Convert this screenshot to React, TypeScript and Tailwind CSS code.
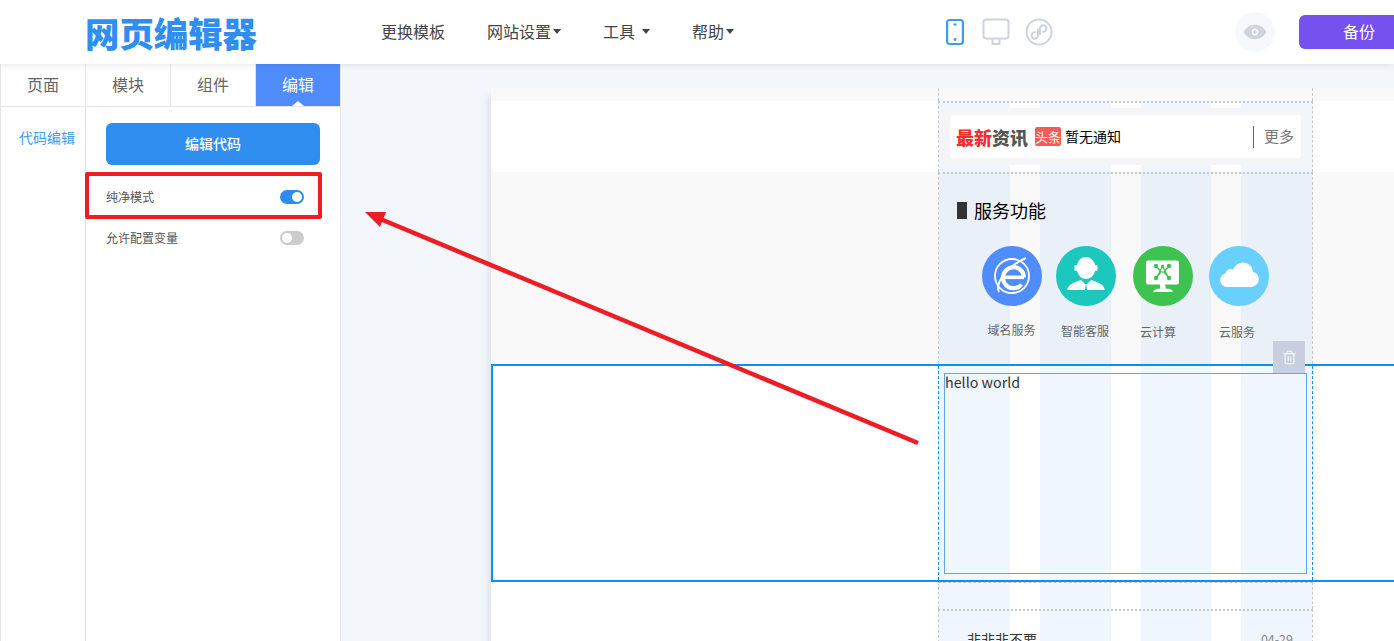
import { Trash2 } from "lucide-react";

const PhoneIcon = () => (
  <svg width="18" height="28" viewBox="0 0 18 28" fill="none">
    <rect x="1.100" y="2" width="15.800" height="24" rx="2.500" stroke="#3d9bf0" strokeWidth="2.200" />
    <rect x="7.500" y="5.500" width="3" height="2" fill="#3d9bf0" />
    <circle cx="9" cy="21.500" r="1.400" fill="#3d9bf0" />
  </svg>
);

const MonitorIcon = () => (
  <svg width="28" height="28" viewBox="0 0 28 28" fill="none" stroke="#cdd3e0" strokeWidth="2">
    <rect x="1.500" y="1.500" width="25" height="19" rx="2.500" />
    <path d="M10.500 21v5h7v-5" />
  </svg>
);

const MiniIcon = () => (
  <svg width="28" height="28" viewBox="0 0 28 28" fill="none" stroke="#cdd3e0" strokeWidth="2">
    <circle cx="14" cy="14" r="12.500" />
    <path d="M13 11.500v6a3.200 3.200 0 1 1-3.200-3.200M15 16.500v-6a3.200 3.200 0 1 1 3.200 3.200" strokeLinecap="round" />
  </svg>
);

const EyeIcon = () => (
  <svg width="24" height="16" viewBox="0 0 24 16">
    <path fillRule="evenodd" fill="#cdd3e0" d="M0.500 8C3.500 3 7.500 0.800 12 0.800S20.500 3 23.500 8C20.500 13 16.500 15.200 12 15.200S3.500 13 0.500 8ZM12 4.600a3.400 3.400 0 1 0 0 6.800a3.400 3.400 0 0 0 0-6.800Z" />
    <circle cx="12" cy="8" r="1.700" fill="#cdd3e0" />
  </svg>
);

const IeIcon = () => (
  <svg viewBox="0 0 60 60" className="w-[60px] h-[60px]">
    <circle cx="30" cy="30" r="30" fill="#4f8dff" />
    <circle cx="30" cy="30" r="17" fill="none" stroke="#fff" strokeWidth="1.800" />
    <path d="M17 46C13 37 24 21 44 12" fill="none" stroke="#fff" strokeWidth="2" />
    <path d="M42 31.500A10.500 10.500 0 1 0 39.500 38.500" fill="none" stroke="#fff" strokeWidth="4.200" />
    <rect x="22" y="29.500" width="20" height="3.600" fill="#fff" />
  </svg>
);

const AgentIcon = () => (
  <svg viewBox="0 0 60 60" className="w-[60px] h-[60px]">
    <circle cx="30" cy="30" r="30" fill="#1cc7bd" />
    <ellipse cx="30" cy="22" rx="9.500" ry="11" fill="#fff" />
    <rect x="18.500" y="19" width="2.500" height="6" rx="1.200" fill="#fff" />
    <rect x="39" y="19" width="2.500" height="6" rx="1.200" fill="#fff" />
    <path d="M11 44c1-6 8-8 14-10l4 4h2l4-4c6 2 13 4 14 10Z" fill="#fff" />
    <path d="M30 37.500l-1.200 6.500h2.400Z" fill="#1cc7bd" />
    <path d="M40 25c0 6-3 8-8 10" fill="none" stroke="#1cc7bd" strokeWidth="1" />
  </svg>
);

const CloudComputeIcon = () => (
  <svg viewBox="0 0 60 60" className="w-[60px] h-[60px]">
    <circle cx="30" cy="30" r="30" fill="#3ec250" />
    <rect x="13" y="14.500" width="33" height="24" rx="2" fill="#fff" />
    <path d="M27 38h5l1 5h-6Z" fill="#fff" />
    <path d="M20 46c1-3 4-3.500 10-3.500s9 .5 10 3.500Z" fill="#fff" />
    <g stroke="#3ec250" strokeWidth="1.200" fill="none">
      <path d="M23 20l5 6 3 0 5-6M23 32l5-6 3 0 5 6M29.500 20l-6 12M29.500 20l6 12" />
    </g>
    <g fill="#3ec250">
      <circle cx="23" cy="20" r="2.200" />
      <circle cx="36" cy="20" r="2.200" />
      <circle cx="23" cy="32" r="2.200" />
      <circle cx="36" cy="32" r="2.200" />
      <circle cx="29.500" cy="20" r="1.500" />
    </g>
  </svg>
);

const CloudIcon = () => (
  <svg viewBox="0 0 60 60" className="w-[60px] h-[60px]">
    <circle cx="30" cy="30" r="30" fill="#69cffc" />
    <path d="M18 41a7 7 0 0 1-1.500-13.800 5.500 5.500 0 0 1 7.500-3.700C26 19.500 29.500 16.500 34 16.500c5.500 0 9.500 4 10 9.200A7.800 7.800 0 0 1 43 41Z" fill="#fff" />
  </svg>
);

const services = [
  { name: "域名服务", icon: <IeIcon />, wrap: "", label: "mt-[16px] -ml-[1px]" },
  { name: "智能客服", icon: <AgentIcon />, wrap: "ml-[14px]", label: "mt-[17px] -ml-[2px]" },
  { name: "云计算", icon: <CloudComputeIcon />, wrap: "ml-[17px]", label: "mt-[18px] -ml-[10px]" },
  { name: "云服务", icon: <CloudIcon />, wrap: "ml-[16px]", label: "mt-[18px] -ml-[4px]" },
];

const tabs = ["页面", "模块", "组件"];

const Toggle = ({ on }: { on: boolean }) =>
  on ? (
    <div className="w-6 h-[14px] rounded-full bg-[#2d8cf0] flex items-center justify-end pr-[2px]">
      <div className="w-[10px] h-[10px] rounded-full bg-white" />
    </div>
  ) : (
    <div className="w-6 h-[14px] rounded-full bg-[#cccccc] flex items-center pl-[2px]">
      <div className="w-[10px] h-[10px] rounded-full bg-white" />
    </div>
  );

const Caret = () => <span className="inline-block ml-[2px] mt-[1px] border-x-[4px] border-x-transparent border-t-[5px] border-t-[#444]" />;

export default function App() {
  return (
    <div className="relative h-screen overflow-hidden bg-white flex flex-col font-['Noto_Sans_CJK_SC','Liberation_Sans',sans-serif]">
      <header className="relative z-20 h-16 shrink-0 bg-white flex items-center pl-[85px] shadow-[0_2px_6px_rgba(0,0,0,0.07)] overflow-hidden">
        <div className="w-[172px] shrink-0 text-[34.400px] leading-none font-black text-[#2f8ef0] whitespace-nowrap">网页编辑器</div>
        <nav className="ml-[124px] flex items-center gap-[42px] text-[16px] leading-6 pb-[2px] text-[#444] whitespace-nowrap shrink-0">
          <span className="w-16">更换模板</span>
          <span className="w-[74px] flex items-center"><span className="w-16">网站设置</span><Caret /></span>
          <span className="w-[47px] flex items-center"><span className="w-[39px]">工具</span><Caret /></span>
          <span className="w-[42px] flex items-center"><span className="w-8">帮助</span><Caret /></span>
        </nav>
        <div className="ml-[212px] flex items-center gap-[18px] shrink-0">
          <PhoneIcon />
          <MonitorIcon />
          <div className="-ml-[3px]"><MiniIcon /></div>
        </div>
        <div className="ml-[182px] w-10 h-10 rounded-full bg-[#f7f8fa] flex items-center justify-center shrink-0">
          <EyeIcon />
        </div>
        <div className="ml-6 w-[120px] h-[34px] shrink-0 rounded-md bg-[#7551f0] text-white text-[16px] pb-[3px] flex items-center pl-11">备份</div>
      </header>

      <div className="flex-1 flex min-h-0">
        <aside className="w-[341px] shrink-0 bg-white border-x border-[#e6e6e6] flex flex-col">
          <div className="flex h-[43px] shrink-0 border-b border-[#e6e6e6] text-[16px] text-[#666]">
            {tabs.map((t) => (
              <div key={t} className="w-[85px] border-r border-[#e6e6e6] pb-[2px] flex items-center justify-center">{t}</div>
            ))}
            <div className="relative flex-1 bg-[#4f8dff] text-white pb-[2px] flex items-center justify-center">
              编辑
              <span className="absolute bottom-0 left-1/2 -translate-x-1/2 border-x-[6px] border-x-transparent border-b-[5px] border-b-white" />
            </div>
          </div>
          <div className="flex-1 flex">
            <div className="w-[85px] border-r border-[#dddddd] pt-5 pl-[18px] text-[14px] leading-5 text-[#3d9bf0] whitespace-nowrap">代码编辑</div>
            <div className="flex-1 pt-4 pl-5 pr-5">
              <div className="w-[214px] h-[42px] rounded-md bg-[#2f8ef0] text-white text-[14px] font-medium pb-[2px] flex items-center justify-center">编辑代码</div>
              <div className="mt-[25px] w-[198px] h-[14px] flex items-center justify-between text-[12px] text-[#555]">
                <span>纯净模式</span>
                <Toggle on />
              </div>
              <div className="mt-[27px] w-[198px] h-[14px] flex items-center justify-between text-[12px] text-[#555]">
                <span>允许配置变量</span>
                <Toggle on={false} />
              </div>
            </div>
          </div>
        </aside>

        <main className="flex-1 min-w-0 bg-[#f3f6fa] pt-6 pl-[150px] overflow-hidden">
          <div className="relative h-full bg-white shadow-[-4px_8px_6px_rgba(0,0,0,0.07)]">
            <div className="absolute top-[13px] bottom-0 left-[448px] w-[373px] flex gap-[30px]">
              <div className="flex-1 bg-[#3d8df5]/[0.08]" />
              <div className="flex-1 bg-[#3d8df5]/[0.08]" />
              <div className="flex-1 bg-[#3d8df5]/[0.08]" />
              <div className="flex-1 bg-[#3d8df5]/[0.08]" />
            </div>

            <div className="h-[13px] bg-[#f9f9f9]">
              <div className="relative ml-[447px] w-[375px] h-full border-x border-dashed border-[#c8c8c8]" />
            </div>

            <div className="h-[71px]">
              <div className="relative ml-[447px] w-[375px] h-full border-x border-t-2 border-dashed [border-top-style:dotted] border-[#c8c8c8] pt-[5px] pr-[3px]">
                <div className="h-[57px] bg-[#f5f5f7] pt-[7px] pl-[11px] pr-[8px]">
                  <div className="h-[43px] rounded bg-white flex items-center pl-[6px] pr-[6px] whitespace-nowrap">
                    <span className="text-[18px] leading-none font-black text-[#f23030]">最新</span>
                    <span className="text-[18px] leading-none font-black text-[#555]">资讯</span>
                    <span className="ml-[7px] w-[26px] h-[19px] rounded-[2px] bg-[#fa5a55] text-white text-[13px] flex items-center justify-center">头条</span>
                    <span className="ml-[4px] text-[14px] text-black">暂无通知</span>
                    <span className="ml-auto w-px h-[22px] bg-[#666]" />
                    <span className="ml-[10px] mr-[1px] text-[15px] text-[#777]">更多</span>
                  </div>
                </div>
              </div>
            </div>

            <div className="h-[192px] bg-[#f9f9f9]">
              <div className="relative ml-[447px] w-[375px] h-full border-x border-t-2 border-dashed [border-top-style:dotted] border-[#c8c8c8]">
                <div className="pt-[23px] pl-[18px] flex items-center">
                  <span className="w-[10px] h-[17px] bg-[#333]" />
                  <span className="ml-[7px] text-[18px] leading-[26px] text-black">服务功能</span>
                </div>
                <div className="mt-[23px] pl-[43px] flex">
                  {services.map((s) => (
                    <div key={s.name} className={`w-[60px] shrink-0 flex flex-col items-center ${s.wrap}`}>
                      {s.icon}
                      <span className={`text-[12px] leading-4 text-[#666] whitespace-nowrap ${s.label}`}>{s.name}</span>
                    </div>
                  ))}
                </div>
              </div>
            </div>

            <div className="relative h-[218px] border-y-2 border-l-2 border-[#0a90fb]">
              <div className="relative ml-[445px] w-[375px] h-full border-x border-dashed border-[#0a90fb] pt-[7px] pl-[5px] pr-[5px] pb-[6px]">
                <div className="h-[201px] border border-[#5aa9f0] text-[14.300px] leading-[16px] text-[#333]">hello world</div>
                <div className="absolute -top-[25px] right-[7px] w-8 h-8 bg-[#c9cfde] flex items-center justify-center">
                  <Trash2 size={15} color="#ffffff" strokeWidth={1.500} />
                </div>
              </div>
            </div>

            <div className="h-[27px]">
              <div className="relative ml-[447px] w-[375px] h-full border-x border-t border-dashed border-[#c8c8c8]" />
            </div>

            <div className="h-[60px]">
              <div className="relative ml-[447px] w-[375px] h-full border-x border-t-2 border-dashed [border-top-style:dotted] border-[#c8c8c8] pt-[18px] pl-[28px] pr-[19px] flex items-start justify-between">
                <span className="text-[14px] leading-5 text-[#333]">非非非不要</span>
                <span className="text-[12.500px] leading-5 text-[#888]">04-29</span>
              </div>
            </div>
          </div>
        </main>
      </div>

      <div className="absolute left-[85px] top-[172px] w-[237px] h-[47px] border-[4px] border-[#ee1c25] rounded-[2px] z-30" />
      <svg className="absolute inset-0 z-30 pointer-events-none" width="1394" height="641" viewBox="0 0 1394 641">
        <path d="M918 443L378 218" stroke="#ee1c25" strokeWidth="4.500" fill="none" />
        <path d="M365 212L386 212L380 227Z" fill="#ee1c25" />
      </svg>
    </div>
  );
}
